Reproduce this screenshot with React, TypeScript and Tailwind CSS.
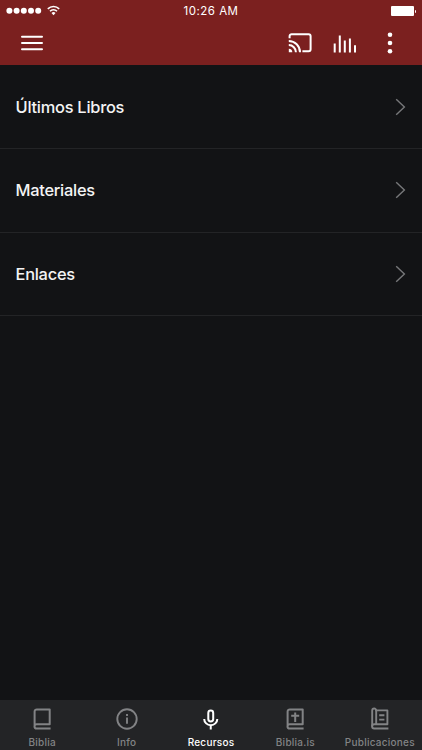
import React from 'react';

interface Tab {
  label: string;
  icon: React.ReactNode;
}

const sections = ['Últimos Libros', 'Materiales', 'Enlaces'];

const activeTab = 'Recursos';

const tabs: Tab[] = [
  { label: 'Biblia', icon: <BookIcon /> },
  { label: 'Info', icon: <InfoIcon /> },
  { label: 'Recursos', icon: <MicIcon /> },
  { label: 'Biblia.is', icon: <BibleIcon /> },
  { label: 'Publicaciones', icon: <PublicationIcon /> },
];

function BookIcon() {
  return (
    <svg width="24" height="24" viewBox="0 0 24 24" fill="none" stroke="currentColor" strokeWidth="2" strokeLinejoin="round">
      <path d="M20.6 21.5H6.6a2.1 2.1 0 0 1 0-4.2h13.1V2.4H6.8a2.2 2.2 0 0 0-2.2 2.2v14.8" />
    </svg>
  );
}

function InfoIcon() {
  return (
    <svg width="24" height="24" viewBox="0 0 24 24" fill="none" stroke="currentColor" strokeWidth="1.9">
      <circle cx="12" cy="12" r="9.7" />
      <path d="M12 10.6v6.2M12 7v2" />
    </svg>
  );
}

function MicIcon() {
  return (
    <svg width="24" height="24" viewBox="0 0 24 24" fill="none" stroke="currentColor" strokeWidth="2">
      <rect x="9.3" y="3.5" width="4.9" height="11" rx="2.45" />
      <path d="M5.2 12a6.55 6.2 0 0 0 13.1 0M11.75 18v4.6" />
    </svg>
  );
}

function BibleIcon() {
  return (
    <svg width="24" height="24" viewBox="0 0 24 24" fill="none" stroke="currentColor" strokeWidth="2" strokeLinejoin="round">
      <path d="M20.6 21.5H6.6a2.1 2.1 0 0 1 0-4.2h13.1V2.4H6.8a2.2 2.2 0 0 0-2.2 2.2v14.8" />
      <path d="M12.2 5.4v9.6M8.2 8.8h8" />
    </svg>
  );
}

function PublicationIcon() {
  return (
    <svg width="24" height="24" viewBox="0 0 24 24" fill="none" stroke="currentColor" strokeWidth="1.9" strokeLinejoin="round">
      <path d="M20.4 21.5H6.2a2.1 2.1 0 0 1 0-4.2h13.2V3.4H8.2v13.9" />
      <path d="M8.2 4.2v-.7a2 2 0 0 0-4 0v15.9" />
      <path d="M11.2 8.2h5.2M11.2 12.6h5.2" />
    </svg>
  );
}

function CastIcon() {
  return (
    <svg width="24" height="20" viewBox="0 0 24 20" fill="none" stroke="currentColor" strokeWidth="2">
      <path d="M1.6 5.2V3.2a2 2 0 0 1 2-2h17a2 2 0 0 1 2 2v13a2 2 0 0 1-2 2h-6.2" />
      <path d="M.8 8a11.2 11.2 0 0 1 11.2 11.2M.8 12.1a7.1 7.1 0 0 1 7.1 7.1" />
      <path d="M.8 15.7a3.5 3.5 0 0 1 3.5 3.5H.8z" fill="currentColor" stroke="none" />
    </svg>
  );
}

function BarsIcon() {
  return (
    <svg width="24" height="18" viewBox="0 0 24 18" fill="none" stroke="currentColor" strokeWidth="2">
      <path d="M1.7 8.4v9M6.8.4v17M11.8 5.4v12M16.9 3.4v14M22 10.2v7.2" />
    </svg>
  );
}

function StatusBar() {
  return (
    <div className="grid h-[22px] grid-cols-3 items-center px-[6px]">
      <div className="flex items-center">
        <svg width="56" height="12" viewBox="0 0 56 12" fill="currentColor">
          <circle cx="3.4" cy="5.8" r="3" />
          <circle cx="10.6" cy="5.8" r="3" />
          <circle cx="17.8" cy="5.8" r="3" />
          <circle cx="25" cy="5.8" r="3" />
          <circle cx="32.2" cy="5.8" r="3" />
          <path d="M41.8 3.8a8.2 8.2 0 0 1 11.4 0M44 6.3a5 5 0 0 1 7 0" fill="none" stroke="currentColor" strokeWidth="1.6" />
          <path d="M45.5 8a2.9 2.9 0 0 1 4 0l-2 2.2z" />
        </svg>
      </div>
      <div className="text-center text-[11.5px] leading-[22px] tracking-[0.5px]">10:26 AM</div>
      <div className="flex items-center justify-end">
        <div className="h-[10px] w-[23px] rounded-[1px] bg-white" />
        <div className="ml-px h-[3px] w-px rounded-r bg-white" />
      </div>
    </div>
  );
}

function Toolbar() {
  return (
    <div className="flex h-[41px] items-center pl-[21px]">
      <svg width="22" height="16" viewBox="0 0 22 16" stroke="currentColor" strokeWidth="2" strokeLinecap="round">
        <path d="M1 1.8h20M1 8h20M1 14.2h20" />
      </svg>
      <div className="ml-auto flex items-center">
        <CastIcon />
        <div className="ml-[21px] mt-[2px]">
          <BarsIcon />
        </div>
        <svg className="ml-[30px] mr-[29px]" width="6" height="22" viewBox="0 0 6 22" fill="currentColor">
          <circle cx="3" cy="2.8" r="2.3" />
          <circle cx="3" cy="11" r="2.3" />
          <circle cx="3" cy="19.2" r="2.3" />
        </svg>
      </div>
    </div>
  );
}

function SectionRow({ label }: { label: string }) {
  return (
    <button className="flex h-[83.5px] w-full items-center justify-between border-b border-[#232426] pl-[15.5px] pr-4 text-left">
      <span className="text-[16.4px] font-medium tracking-[-0.25px] text-[#f4f4f4]">{label}</span>
      <svg width="11" height="18" viewBox="0 0 11 18" fill="none" stroke="#77787a" strokeWidth="1.4">
        <path d="M1.2 1.2 9.4 9l-8.2 7.8" />
      </svg>
    </button>
  );
}

function TabBar() {
  return (
    <nav className="grid h-[50px] grid-cols-5 bg-[#232426]">
      {tabs.map((tab) => (
        <div
          key={tab.label}
          className={
            tab.label === activeTab
              ? 'flex flex-col items-center pt-[7px] text-white'
              : 'flex flex-col items-center pt-[7px] text-[#828385]'
          }
        >
          {tab.icon}
          <span className="mt-1 text-[10px] font-medium leading-[14px] tracking-[0.25px]">{tab.label}</span>
        </div>
      ))}
    </nav>
  );
}

export default function App() {
  return (
    <div className="flex h-[750px] w-[422px] flex-col overflow-hidden bg-[#121315] font-['Inter',sans-serif] text-white">
      <header className="h-[65px] shrink-0 bg-[#7b201f]">
        <StatusBar />
        <Toolbar />
      </header>
      <main className="flex-1 pt-[0.7px]">
        {sections.map((label) => (
          <SectionRow key={label} label={label} />
        ))}
      </main>
      <TabBar />
    </div>
  );
}
